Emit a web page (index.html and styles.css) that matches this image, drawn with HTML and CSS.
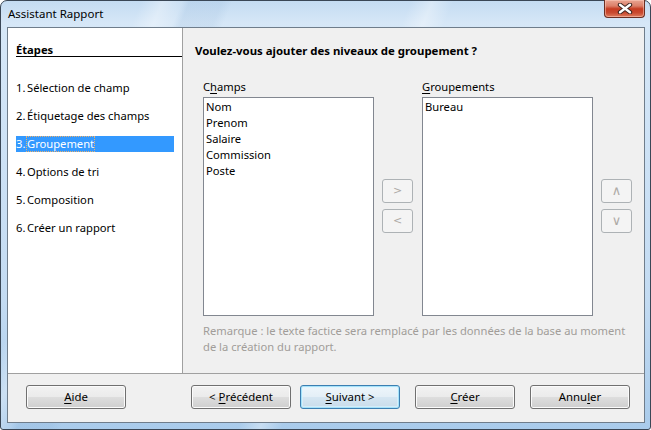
FILE: index.html
```html
<!DOCTYPE html>
<html lang="fr">
<head>
<meta charset="utf-8">
<title>Assistant Rapport</title>
<link rel="stylesheet" href="styles.css">
</head>
<body>
<div class="window">
  <div class="titlebar">
    <span class="title">Assistant Rapport</span>
    <button class="close" aria-label="Fermer">
      <svg width="16" height="11" viewBox="0 0 16 11">
        <path d="M3 1.8 L13 9.2 M13 1.8 L3 9.2" stroke="#3d2520" stroke-width="4.4" stroke-linecap="round" fill="none"/>
        <path d="M3 1.8 L13 9.2 M13 1.8 L3 9.2" stroke="#ffffff" stroke-width="2.4" stroke-linecap="round" fill="none"/>
      </svg>
    </button>
  </div>
  <div class="client">
    <div class="main">
      <div class="steps">
        <div class="steps-head">Étapes</div>
        <ul class="step-list">
          <li class="step"><span class="num">1.</span><span class="lbl">Sélection de champ</span></li>
          <li class="step"><span class="num">2.</span><span class="lbl">Étiquetage des champs</span></li>
          <li class="step active"><span class="num">3.</span><span class="lbl focus">Groupement</span></li>
          <li class="step"><span class="num">4.</span><span class="lbl">Options de tri</span></li>
          <li class="step"><span class="num">5.</span><span class="lbl">Composition</span></li>
          <li class="step"><span class="num">6.</span><span class="lbl">Créer un rapport</span></li>
        </ul>
      </div>
      <div class="page">
        <h1 class="page-title">Voulez-vous ajouter des niveaux de groupement ?</h1>
        <div class="lists">
          <div class="col">
            <div class="col-label">C<u>h</u>amps</div>
            <ul class="listbox">
              <li>Nom</li>
              <li>Prenom</li>
              <li>Salaire</li>
              <li>Commission</li>
              <li>Poste</li>
            </ul>
          </div>
          <div class="movebtns">
            <button class="small">&gt;</button>
            <button class="small">&lt;</button>
          </div>
          <div class="col">
            <div class="col-label"><u>G</u>roupements</div>
            <ul class="listbox">
              <li>Bureau</li>
            </ul>
          </div>
          <div class="movebtns">
            <button class="small big">∧</button>
            <button class="small big">∨</button>
          </div>
        </div>
        <p class="note">Remarque : le texte factice sera remplacé par les données de la base au moment<br>de la création du rapport.</p>
      </div>
    </div>
    <div class="footer">
      <button class="btn"><u>A</u>ide</button>
      <button class="btn prev">&lt; <u>P</u>récédent</button>
      <button class="btn default"><u>S</u>uivant &gt;</button>
      <button class="btn wide-gap"><u>C</u>réer</button>
      <button class="btn wide-gap">Annu<u>l</u>er</button>
    </div>
  </div>
</div>
</body>
</html>
```

FILE: styles.css
```css
* { box-sizing: border-box; }

html, body {
  margin: 0;
  padding: 0;
  width: 651px;
  height: 430px;
  overflow: hidden;
  background: #ffffff;
}

body {
  font-family: "Noto Sans", "Open Sans", "DejaVu Sans", sans-serif;
  font-size: 11.2px;
  line-height: 16px;
  color: #000000;
}

u { text-decoration: underline; text-underline-offset: 2px; }

.window {
  width: 651px;
  height: 430px;
  border: 1px solid #3a4756;
  border-radius: 7px 7px 3px 3px;
  padding: 0 5px 6px 6px;
  display: flex;
  flex-direction: column;
  background:
    linear-gradient(112deg,
      rgba(255,255,255,0) 0px,
      rgba(255,255,255,0) 130px,
      rgba(255,255,255,0.35) 150px,
      rgba(255,255,255,0.1) 168px,
      rgba(120,160,200,0.12) 175px,
      rgba(120,160,200,0.12) 205px,
      rgba(255,255,255,0) 215px,
      rgba(255,255,255,0) 380px,
      rgba(255,255,255,0.35) 400px,
      rgba(255,255,255,0) 420px,
      rgba(255,255,255,0) 651px),
    linear-gradient(180deg, #c4dcf2 0px, #d6e7f7 22px, #cfe3f6 120px, #c3dbf2 300px, #a9cbeb 430px);
}

.titlebar {
  height: 26px;
  flex: none;
  display: flex;
  align-items: flex-start;
  justify-content: space-between;
}

.title {
  padding: 5px 0 0 1px;
  font-size: 11.5px;
  line-height: 16px;
  color: #000000;
}

.close {
  margin: -1px 0 0 0;
  width: 41px;
  height: 18px;
  padding: 0;
  border: 1px solid #6b2e22;
  border-top: none;
  border-radius: 0 0 4px 4px;
  background: linear-gradient(180deg, #e9a592 0%, #dc806a 35%, #c63c22 52%, #c94a30 75%, #df7d5e 100%);
  box-shadow: inset 0 0 0 1px rgba(255,210,195,0.5);
  display: flex;
  align-items: center;
  justify-content: center;
}

.close svg { display: block; }

.client {
  flex: 1;
  border: 1px solid #6f7d8b;
  background: #f0f0f0;
  display: flex;
  flex-direction: column;
}

.main {
  height: 345px;
  flex: none;
  display: flex;
}

.steps {
  width: 175px;
  flex: none;
  background: #ffffff;
  border-right: 1px solid #a0a0a0;
}

.steps-head {
  margin: 16px 0 0 8px;
  line-height: 12px;
  height: 13px;
  font-weight: bold;
  border-bottom: 1px solid #000000;
}

.step-list {
  list-style: none;
  margin: 23px 0 0 0;
  padding: 0;
  display: flex;
  flex-direction: column;
  gap: 12px;
}

.step {
  margin: 0 8px;
  height: 16px;
  line-height: 16px;
  white-space: nowrap;
  display: flex;
}

.step .num {
  width: 11px;
  flex: none;
}

.step.active {
  background: #3399ff;
  color: #ffffff;
}

.step .focus {
  outline: 1px dotted #e8b070;
  outline-offset: -1px;
  padding: 0 1px;
  margin-left: -1px;
}

.page {
  flex: 1;
  padding: 15px 0 0 12px;
}

.page-title {
  margin: 0;
  font-size: 11.4px;
  line-height: 16px;
  font-weight: bold;
}

.lists {
  margin: 20px 0 0 8px;
  display: flex;
  align-items: stretch;
}

.col {
  display: flex;
  flex-direction: column;
  gap: 2px;
}

.col-label {
  line-height: 16px;
  height: 16px;
}

.listbox {
  list-style: none;
  margin: 0;
  width: 171px;
  height: 219px;
  padding: 1px 2px;
  background: #ffffff;
  border: 1px solid #828790;
}

.listbox li {
  line-height: 16px;
  height: 16px;
  white-space: nowrap;
}

.movebtns {
  width: 31px;
  margin: 0 9px 0 8px;
  padding-top: 16px;
  display: flex;
  flex-direction: column;
  justify-content: center;
  gap: 6px;
}

.small {
  width: 31px;
  height: 24px;
  padding: 0;
  border: 1px solid #adb2b5;
  border-radius: 3px;
  background: #f4f4f4;
  color: #aeaaa6;
  font-family: "DejaVu Sans", "Noto Sans", sans-serif;
  font-size: 11px;
  line-height: 20px;
}

.small.big {
  font-size: 13px;
}

.note {
  margin: 7px 0 0 8px;
  color: #a19d99;
  line-height: 16px;
  white-space: nowrap;
}

.footer {
  flex: 1;
  border-top: 1px solid #a0a0a0;
  padding: 11px 0 0 18px;
  display: flex;
  align-items: flex-start;
}

.btn {
  width: 100px;
  height: 24px;
  padding: 0;
  font-family: inherit;
  font-size: 11.4px;
  line-height: 20px;
  color: #000000;
  border: 1px solid #707070;
  border-radius: 3px;
  background: linear-gradient(180deg, #f2f2f2 0%, #ebebeb 48%, #dddddd 52%, #cfcfcf 100%);
  box-shadow: inset 0 0 0 1px #fbfbfb;
}

.btn.prev { margin-left: 65px; }

.btn.default {
  margin-left: 9px;
  border-color: #3c7fb1;
  box-shadow: inset 0 0 0 1px #a6e2fa, inset 0 0 0 2px rgba(220,245,255,0.6);
  background: linear-gradient(180deg, #eef6fb 0%, #e4eff7 48%, #d5e6f2 52%, #c9dcea 100%);
}

.btn.wide-gap { margin-left: 15px; }
```
